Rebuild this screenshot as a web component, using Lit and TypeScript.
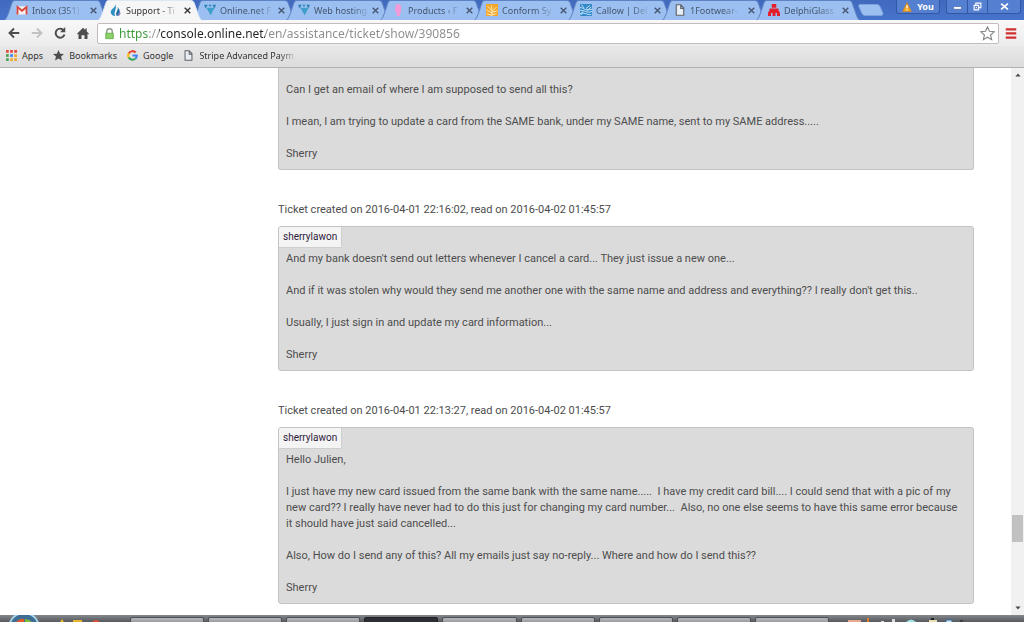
import { LitElement, html, svg, css } from "lit";
import { customElement, property } from "lit/decorators.js";
import { classMap } from "lit/directives/class-map.js";

const icons: Record<string, unknown> = {
  mail: svg`<path fill="#f4eeee" d="M1 3h14v11H1z"/><path fill="none" stroke="#d8453c" stroke-width="2.4" d="M2 14V4l6 5 6-5v10"/>`,
  drop: svg`<path fill="#2b8fc4" d="M7 0C8 5 1 6 1 11c0 3 3 5 6 5C4 11 10 7 7 0z"/><path fill="#1b6f9f" d="M10 4c2 5-4 7-1 12 6-1 5-8 1-12z"/><path fill="#8a7fc8" d="M12 9c1 3-2 4-2 7 5-1 5-4 2-7z"/>`,
  vee: svg`<path fill="#3f9fcb" d="M3 5h11l-5 10z"/><path fill="#2c82b3" d="M0 1h5L2 6zM16 1h-5l3 5zM6 1h4L8 4z"/>`,
  pink: svg`<path fill="#f39ad8" d="M7 0c5 0 6 3 5 6 1 4-1 6-2 10H6c1-4 0-6-3-8 3 0 0-8 4-8z"/>`,
  orange: svg`<path fill="#f4a62a" d="M0 0h16v16H0z"/><path fill="none" stroke="#fff0c8" stroke-width="1.2" d="M8 16V9M8 9 2 3M8 9l-1-7M8 10l6-6M8 11l7-2M8 12 1 8M8 14l6-1M8 15l-7-2"/>`,
  blue: svg`<path fill="#3588c8" d="M0 0h16v16H0z"/><path fill="none" stroke="#d3edff" stroke-width="1.2" d="M0 5c5-1 5 5 16 2M0 9c6-2 8 4 16 1M0 13c5-3 9 2 15 1M8 6l5-4M5 5 2 1M9 9l6-5M4 10l-3 5"/>`,
  document: svg`<path fill="#e9eef5" stroke="#5f6368" stroke-width="1.5" d="M3 1h6l4 4v10H3zM9 1v5h4"/>`,
  red: svg`<path fill="#e3202b" d="M5 0h6v5H5zM2 6h12v4H2zM0 11h4v5H0zM6 11h4v5H6zM12 11h4v5h-4z"/><path fill="#e3202b" d="M1 9h14v3H1z"/>`,
  close: svg`<path fill="none" stroke="currentColor" stroke-width="2.4" d="m3 3 10 10M13 3 3 13"/>`,
  back: svg`<path fill="none" stroke="#4d4d4d" stroke-width="2.5" d="M15 8H3M8 2 2 8l6 6"/>`,
  forward: svg`<path fill="none" stroke="#c2c2c2" stroke-width="2.5" d="M1 8h12M8 2l6 6-6 6"/>`,
  reload: svg`<path fill="none" stroke="#4d4d4d" stroke-width="2.6" d="M13 4.500A6 6 0 1 0 14 10"/><path fill="#4d4d4d" d="M15 0v7H8z"/>`,
  home: svg`<path fill="#4d4d4d" d="M8 1 0 9l1 1 1-1v7h4v-5h4v5h4V9l1 1 1-1-3-3V2h-2v2z"/>`,
  lock: svg`<path fill="none" stroke="#8f9a8c" stroke-width="2" d="M4 8V5a4 4 0 0 1 8 0v3"/><path fill="#7fc95c" stroke="#5aa43c" d="M2.500 7.500h11v8h-11z"/><path stroke="#a9e08b" d="M4 10h8M4 13h8"/>`,
  star: svg`<path fill="#fff" stroke="#858585" stroke-width="1.200" d="m8 1 2.100 4.700 5 .5-3.800 3.400 1.100 5L8 12l-4.400 2.600 1.100-5L.9 6.200l5-.5z"/>`,
  solidStar: svg`<path fill="#4d4d4d" d="m8 0 2.300 5.300 5.700.5-4.300 3.800 1.300 5.700-5-3-5 3 1.300-5.700L0 5.800l5.700-.5z"/>`,
  menu: svg`<path stroke="#d22f2f" stroke-width="3" d="M1 3h14M1 8.500h14M1 14h14"/>`,
  apps: svg`<path fill="#e34b3e" d="M0 0h4v4H0zM6 0h4v4H6zM12 0h4v4h-4z"/><path fill="#4aa55a" d="M0 6h4v4H0z"/><path fill="#4285f4" d="M6 6h4v4H6z"/><path fill="#f0a92b" d="M12 6h4v4h-4zM6 12h4v4H6zM12 12h4v4h-4z"/><path fill="#4aa55a" d="M0 12h4v4H0z"/>`,
  google: svg`<g fill="none" stroke-width="3"><path stroke="#ea4335" d="M2.500 5A6.300 6.300 0 0 1 12.700 3.700"/><path stroke="#fbbc05" d="M2.500 5a6.300 6.300 0 0 0 0 6"/><path stroke="#34a853" d="M2.500 11a6.300 6.300 0 0 0 9.800 1.500"/><path stroke="#4285f4" d="M12.300 12.500A6 6 0 0 0 14.300 8H8"/></g>`,
  warn: svg`<path fill="#f5a623" stroke="#d97e12" d="M8 1 15 15H1z"/><path stroke="#fff" stroke-width="2" d="M8 5v5M8 11.500v2"/>`,
  minimize: svg`<path fill="#fff" stroke="#31539a" d="M1 8h14v5H1z"/>`,
  restore: svg`<path fill="none" stroke="#fff" stroke-width="2" d="M5 5V2h9v8h-3M2 6h8v8H2z"/><path fill="#fff" d="M5 9h2v2H5z"/>`,
  shut: svg`<path stroke="#fff" stroke-width="3" d="m2 3 12 10M14 3 2 13"/>`,
  up: svg`<path fill="#4b4b4b" d="m8 4 7 8H1z"/>`,
  down: svg`<path fill="#4b4b4b" d="m8 12 7-8H1z"/>`,
};

const icon = (name: string) =>
  html`<svg class="icon ${name}" viewBox="0 0 16 16" aria-hidden="true">${icons[name]}</svg>`;

const base = css`
  * { box-sizing: border-box; }
  button { border: 0; padding: 0; margin: 0; background: none; font: inherit; color: inherit; display: flex; align-items: center; justify-content: center; }
  .icon { width: 12px; height: 12px; flex: none; display: block; }
`;

const tabs = [
  { icon: "mail", title: "Inbox (351)" },
  { icon: "drop", title: "Support - Ti", active: true },
  { icon: "vee", title: "Online.net F" },
  { icon: "vee", title: "Web hosting" },
  { icon: "pink", title: "Products ‹ F" },
  { icon: "orange", title: "Conform Sy" },
  { icon: "blue", title: "Callow | Del" },
  { icon: "document", title: "1Footwear-" },
  { icon: "red", title: "DelphiGlass" },
];

@customElement("browser-tab")
class BrowserTab extends LitElement {
  @property() name = "";
  @property() icon = "";
  @property({ type: Boolean, reflect: true }) active = false;

  static styles = [base, css`
    :host { display: grid; flex: 0 1 104px; min-width: 0; margin-right: -10px; color: #45566f; }
    :host([active]) { z-index: 1; color: #333; }
    .shape { grid-area: 1 / 1; width: 100%; height: 20px; display: block; }
    .shape path { fill: #9bbff0; stroke: #5d83c4; }
    :host([active]) .shape path { fill: #f6f6f6; stroke: #dfe7f5; }
    .row { grid-area: 1 / 1; min-width: 0; display: flex; align-items: center; padding: 0 7px 0 12px; }
    .select { flex: 1; min-width: 0; justify-content: flex-start; gap: 4px; height: 20px; }
    .title { flex: none; white-space: nowrap; -webkit-mask-image: linear-gradient(90deg, #000 70%, #0003); }
    .close { width: 16px; height: 16px; flex: none; }
    .close .icon { width: 9px; height: 9px; }
  `];

  render() {
    return html`
      <svg class="shape" viewBox="0 0 104 20" preserveAspectRatio="none" aria-hidden="true">
        <path d="M0 20.500C4 19 7 3 9 1q1-.5 2-.5h82q2 0 3 2l5 14q1 3 3 4" />
      </svg>
      <div class="row">
        <button class="select">${icon(this.icon)}<span class="title">${this.name}</span></button>
        <button class="close" aria-label="Close tab">${icon("close")}</button>
      </div>`;
  }
}

@customElement("ticket-message")
class TicketMessage extends LitElement {
  @property() created = "";
  @property() author = "";
  @property({ attribute: false }) lines: string[] = [];

  static styles = [base, css`
    :host { display: block; }
    .created { margin: 0 0 8px; line-height: 16px; }
    .box { background: #dbdbdb; border: 1px solid #c3c3c3; border-radius: 3px; padding-bottom: 7px; }
    .box.continued { border-top: 0; border-radius: 0 0 3px 3px; padding-top: 14px; }
    .author { display: block; width: fit-content; height: 21px; font-size: 10px; line-height: 20px; padding: 0 4px; margin-bottom: 3px; background: #f4f4f4; border-right: 1px solid #cecece; border-bottom: 1px solid #cecece; border-radius: 2px 0 2px 0; color: #2e1a3c; text-decoration: none; }
    .text { margin: 0; padding: 0 7px; line-height: 16px; white-space: pre-wrap; }
    .text + .text { margin-top: 16px; }
  `];

  render() {
    return html`
      ${this.created ? html`<p class="created">${this.created}</p>` : ""}
      <article class=${classMap({ box: true, continued: !this.created })}>
        ${this.author ? html`<a class="author" href="#">${this.author}</a>` : ""}
        ${this.lines.map((line) => html`<p class="text">${line}</p>`)}
      </article>`;
  }
}

const tickets = [
  { created: "", author: "", lines: [
    "Can I get an email of where I am supposed to send all this?",
    "I mean, I am trying to update a card from the SAME bank, under my SAME name, sent to my SAME address.....",
    "Sherry",
  ] },
  { created: "Ticket created on 2016-04-01 22:16:02, read on 2016-04-02 01:45:57", author: "sherrylawon", lines: [
    "And my bank doesn't send out letters whenever I cancel a card... They just issue a new one...",
    "And if it was stolen why would they send me another one with the same name and address and everything?? I really don't get this..",
    "Usually, I just sign in and update my card information...",
    "Sherry",
  ] },
  { created: "Ticket created on 2016-04-01 22:13:27, read on 2016-04-02 01:45:57", author: "sherrylawon", lines: [
    "Hello Julien,",
    "I just have my new card issued from the same bank with the same name.....  I have my credit card bill.... I could send that with a pic of my new card?? I really have never had to do this just for changing my card number...  Also, no one else seems to have this same error because it should have just said cancelled...",
    "Also, How do I send any of this? All my emails just say no-reply... Where and how do I send this??",
    "Sherry",
  ] },
];

@customElement("app-root")
class AppRoot extends LitElement {
  static styles = [base, css`
    :host { display: flex; flex-direction: column; height: 100vh; overflow: hidden; background: #fff; font: 9px "Noto Sans", sans-serif; color: #333; }
    .strip { display: flex; flex: none; height: 20px; padding-left: 4px; background: linear-gradient(#4169bd, #4673cb); }
    .tabs { display: flex; flex: 0 1 852px; min-width: 0; }
    .new { width: 30px; height: 20px; flex: none; z-index: 1; }
    .new svg { width: 26px; height: 12px; }
    .window { margin-left: auto; padding-right: 3px; display: flex; gap: 6px; align-items: flex-start; color: #fff; }
    .user, .controls { height: 14px; border: 1px solid #3358a5; border-top: 0; border-radius: 0 0 3px 3px; background: #5580d2; }
    .user { width: 44px; gap: 5px; font-weight: 700; }
    .user .icon { width: 10px; height: 10px; }
    .controls { display: flex; }
    .controls button { width: 20px; }
    .controls button + button { border-left: 1px solid #3358a5; }
    .controls button:last-child { width: 33px; }
    .controls .icon { width: 9px; height: 9px; }
    .toolbar { display: flex; flex: none; align-items: center; gap: 11px; height: 26px; padding: 0 7px 0 8px; background: linear-gradient(#f8f8f8, #ececec); }
    .address { flex: 1; display: flex; align-items: center; gap: 4px; height: 21px; margin-left: -3px; margin-right: -5px; padding: 0 3px 0 6px; background: #fff; border: 1px solid #c4bcbc; border-radius: 2px; }
    .address .lock { width: 11px; height: 13px; }
    .address .star { width: 15px; height: 15px; }
    .url { flex: 1; min-width: 0; height: 18px; border: 0; padding: 0; outline: 0; font: 12px "Noto Sans", sans-serif; color: transparent; background: linear-gradient(90deg, #3a9a3a 29px, #999 29px 40px, #222 40px 146px, #8b8b8b 146px); -webkit-background-clip: text; background-clip: text; }
    .bookmarks { display: flex; flex: none; align-items: center; gap: 10px; height: 22px; padding: 0 0 2px 6px; border-bottom: 1px solid #b2b2b2; background: linear-gradient(#e8e8e8, #dcdcdc); }
    .bookmark { display: flex; align-items: center; gap: 5px; color: inherit; text-decoration: none; white-space: nowrap; }
    .bookmark .icon { width: 11px; height: 11px; }
    .faded { -webkit-mask-image: linear-gradient(90deg, #000 85%, #0003); }
    .view { flex: 1; min-height: 0; display: flex; }
    .messages { flex: 1; min-width: 0; overflow: hidden; padding: 0 37px 0 278px; display: flex; flex-direction: column; gap: 32px; font: 11px Roboto, sans-serif; color: #4d4d4d; }
    .scroll { width: 13px; flex: none; display: flex; flex-direction: column; background: #f1f1f1; }
    .scroll button { height: 14px; flex: none; }
    .scroll .icon { width: 6px; height: 6px; }
    .track { flex: 1; display: grid; grid-template-rows: 433fr 27px 59fr; }
    .thumb { grid-row: 2; margin: 0 1px; background: #c1c1c1; }
    .taskbar { flex: none; height: 7px; display: flex; overflow: hidden; background: linear-gradient(#85898d, #55595d); }
    .start { width: 130px; flex: none; }
    .start svg, .tray svg { display: block; height: 7px; }
    .tasks { flex: 0 1 699px; display: flex; gap: 4px; padding: 2px 0 0; }
    .task { flex: 1; height: 8px; border: 1px solid #4c5054; border-radius: 2px 2px 0 0; background: linear-gradient(#b5b8bb, #8a8e92); }
    .task.current { background: #2c2e33; border-color: #202226; }
    .tray { margin-left: 16px; }
  `];

  render() {
    return html`
      <header class="strip">
        <nav class="tabs" aria-label="Tabs">
          ${tabs.map((t) => html`<browser-tab .name=${t.title} .icon=${t.icon} ?active=${!!t.active}></browser-tab>`)}
        </nav>
        <button class="new" aria-label="New tab">
          <svg viewBox="0 0 26 12"><path fill="#9bbff0" stroke="#7ba1de" d="M2 .5h17q2 0 3 2l3 7q0 2-2 2H7q-2 0-3-2L1 3Q0 1 2 .5z" /></svg>
        </button>
        <div class="window">
          <button class="user">${icon("warn")}You</button>
          <div class="controls">
            <button aria-label="Minimize">${icon("minimize")}</button>
            <button aria-label="Restore">${icon("restore")}</button>
            <button aria-label="Close">${icon("shut")}</button>
          </div>
        </div>
      </header>
      <div class="toolbar">
        <button aria-label="Back">${icon("back")}</button>
        <button aria-label="Forward">${icon("forward")}</button>
        <button aria-label="Reload">${icon("reload")}</button>
        <button aria-label="Home">${icon("home")}</button>
        <div class="address">
          ${icon("lock")}
          <input class="url" aria-label="Address" value="https://console.online.net/en/assistance/ticket/show/390856" />
          <button aria-label="Bookmark this page">${icon("star")}</button>
        </div>
        <button aria-label="Menu">${icon("menu")}</button>
      </div>
      <nav class="bookmarks" aria-label="Bookmarks">
        <a class="bookmark" href="#">${icon("apps")}Apps</a>
        <a class="bookmark" href="#">${icon("solidStar")}Bookmarks</a>
        <a class="bookmark" href="#">${icon("google")}Google</a>
        <a class="bookmark" href="#">${icon("document")}<span class="faded">Stripe Advanced Paym</span></a>
      </nav>
      <div class="view">
        <main class="messages">
          ${tickets.map((t) => html`<ticket-message .created=${t.created} .author=${t.author} .lines=${t.lines}></ticket-message>`)}
        </main>
        <div class="scroll">
          <button aria-label="Scroll up">${icon("up")}</button>
          <div class="track"><div class="thumb"></div></div>
          <button aria-label="Scroll down">${icon("down")}</button>
        </div>
      </div>
      <footer class="taskbar">
        <button class="start" aria-label="Start">
          <svg width="130" viewBox="0 0 130 7">
            <circle cx="24" cy="13" r="15" fill="#3c6f93" stroke="#a9d3ea" stroke-width="2" />
            <path fill="#e2592b" d="M16 7q4-4 8-3v3z" /><path fill="#7dbb3c" d="M25 4q4 0 7 3h-7z" />
            <path fill="#e8b52c" d="m60 7 2-3 2 3zM73 5h9v2h-9z" /><path fill="#d9542f" d="M92 7q4-4 8 0z" />
          </svg>
        </button>
        <div class="tasks">
          ${Array.from({ length: 9 }, (_, i) => html`<button class=${classMap({ task: true, current: i === 3 })} aria-label="Window ${i + 1}"></button>`)}
        </div>
        <div class="tray">
          <svg width="130" viewBox="0 0 130 7" aria-hidden="true">
            <path fill="#e8a98c" d="M3 5h13v2H3z" /><path fill="#e27a26" d="M22 3h2v4h-2z" />
            <path fill="#d9dcdf" d="M36 6h3v1h-3zM47 4h3v3h-3z" /><path fill="#9fe0e4" d="M61 7q5-5 10 0z" />
            <path fill="#e9dfb0" d="M84 5h8v2h-8z" /><path fill="#222" d="M86 3h3v2h-3z" />
            <path fill="#cfe3f6" stroke="#3b6ea0" d="M101 5h6v4h-6z" /><path fill="#3b3f43" d="M115 5h3v2h-3z" />
          </svg>
        </div>
      </footer>`;
  }
}
